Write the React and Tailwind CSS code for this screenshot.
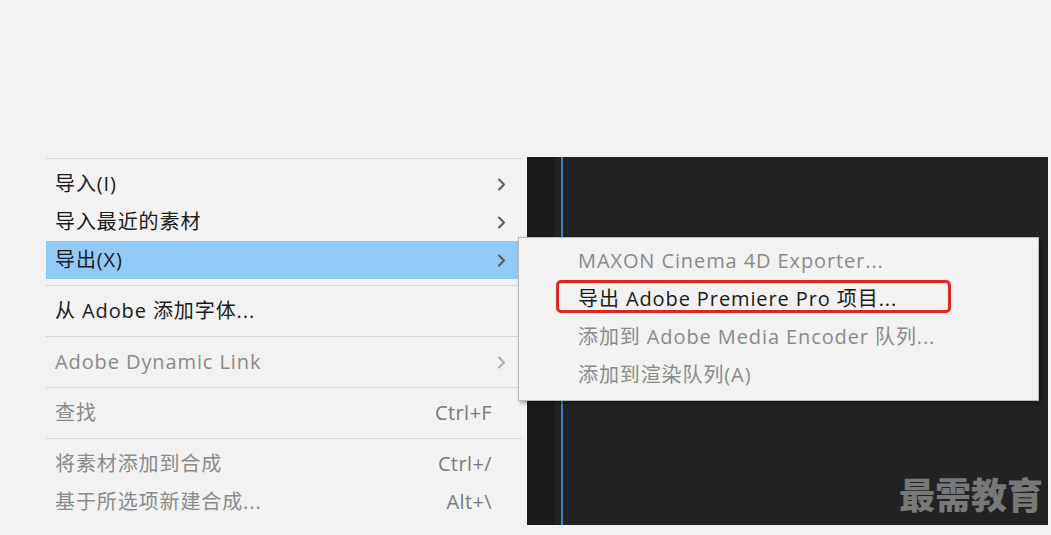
import React from "react";

const Chevron = ({ color = "#5a5a5a" }) => (
  <svg width="9" height="13" viewBox="0 0 9 13" fill="none">
    <path d="M2 1.5l5 5-5 5" stroke={color} strokeWidth="2" strokeLinecap="round" strokeLinejoin="round" />
  </svg>
);

const Row = ({ label, right, sub, disabled, active }) => (
  <div
    className={`h-[38px] flex items-center pl-[9px] pr-[16px] ${active ? "bg-[#91c9f7]" : ""} ${
      disabled ? "text-[#8a8a8a]" : "text-[#1a1a1a]"
    }`}
  >
    <span className="flex-1">{label}</span>
    {right && <span className="text-[#7a7a7a] pr-[14px] tracking-[0.4px]">{right}</span>}
    {sub && <Chevron color={disabled ? "#aaaaaa" : "#5a5a5a"} />}
  </div>
);

const Sep = () => (
  <div className="h-[13px] flex items-center">
    <div className="w-full h-px bg-[#d6d6d6]" />
  </div>
);

const SubRow = ({ label, disabled }) => (
  <div className={`h-[38px] flex items-center pl-[59px] ${disabled ? "text-[#8a8a8a]" : "text-[#1a1a1a]"}`}>
    {label}
  </div>
);

const App = () => {
  return (
    <div
      className="relative w-[1051px] h-[535px] overflow-hidden bg-[#f2f2f2] text-[20px] tracking-[0.9px]"
      style={{ fontFamily: '"Open Sans", "Noto Sans CJK SC", sans-serif' }}
    >
      <div className="flex pt-[157px] pl-[46px]">
        <div className="w-[476px] h-[368px] mt-px border-t border-[#dadada] bg-[#f2f2f2] pt-[6px]">
          <Row label="导入(I)" sub />
          <Row label="导入最近的素材" sub />
          <Row label="导出(X)" sub active />
          <Sep />
          <Row label="从 Adobe 添加字体..." />
          <Sep />
          <Row label="Adobe Dynamic Link" sub disabled />
          <Sep />
          <Row label="查找" right="Ctrl+F" disabled />
          <Sep />
          <Row label="将素材添加到合成" right="Ctrl+/" disabled />
          <Row label="基于所选项新建合成..." right="Alt+\" disabled />
        </div>
        <div className="relative ml-[5px] w-[521px] h-[368px] bg-[#222222] flex">
          <div className="w-[28px] bg-[#1b1b1b]" />
          <div className="w-[6px]" />
          <div className="w-[2px] bg-[#3b7fd1]" />
          <div
            className="absolute right-[5px] bottom-[14px] text-[36px] font-black text-[#787878] leading-none tracking-normal"
            style={{ fontFamily: '"Noto Sans CJK SC", sans-serif' }}
          >
            最需教育
          </div>
        </div>
      </div>

      <div className="absolute left-[518px] top-[237px] w-[521px] h-[164px] bg-[#f2f2f2] border border-[#b9b9b9] shadow-[2px_2px_4px_rgba(0,0,0,0.35)] pt-[4px]">
        <SubRow label="MAXON Cinema 4D Exporter..." disabled />
        <SubRow label="导出 Adobe Premiere Pro 项目..." />
        <SubRow label="添加到 Adobe Media Encoder 队列..." disabled />
        <SubRow label="添加到渲染队列(A)" disabled />
        <div className="absolute left-[37px] top-[42px] w-[395px] h-[33px] border-[3px] border-[#e52420] rounded-[5px]" />
      </div>
    </div>
  );
};

export default App;
